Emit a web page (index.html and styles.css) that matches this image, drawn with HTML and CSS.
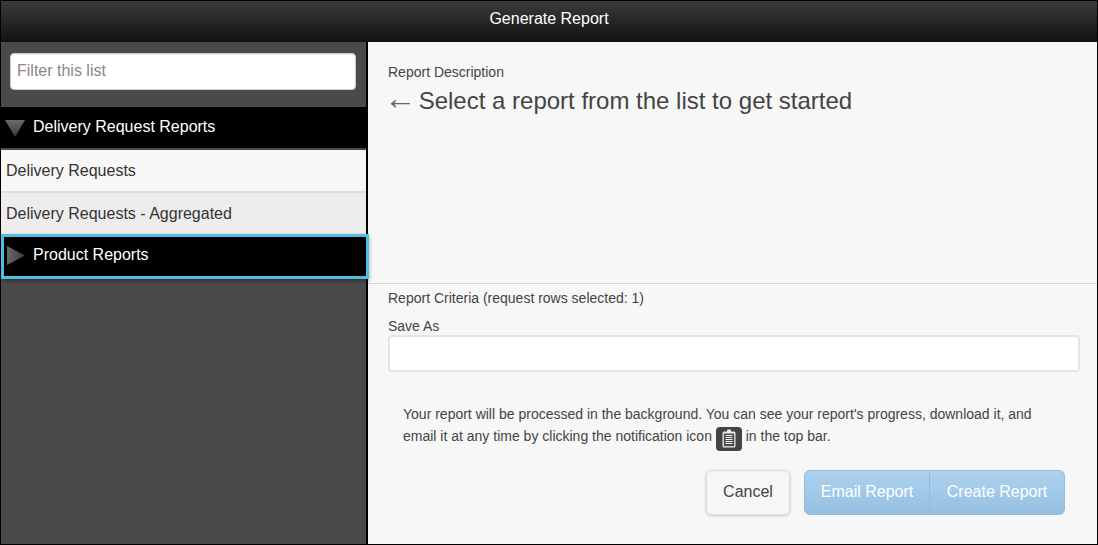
FILE: index.html
```html
<!DOCTYPE html>
<html lang="en">
<head>
<meta charset="utf-8">
<title>Generate Report</title>
<link rel="stylesheet" href="styles.css">
</head>
<body>
<div class="window">
  <header class="titlebar">Generate Report</header>
  <div class="main">
    <aside class="sidebar">
      <div class="filter-wrap">
        <input class="filter" type="text" placeholder="Filter this list">
      </div>
      <div class="group group-open">
        <svg class="tri" width="20" height="18" viewBox="0 0 20 18"><defs><linearGradient id="g1" x1="0" y1="0" x2="0" y2="1"><stop offset="0" stop-color="#6a6a6a"/><stop offset="1" stop-color="#3a3a3a"/></linearGradient></defs><path d="M0 1H20L10 18Z" fill="url(#g1)"/></svg>
        <span>Delivery Request Reports</span>
      </div>
      <div class="item">Delivery Requests</div>
      <div class="item item-alt">Delivery Requests - Aggregated</div>
      <div class="group group-focus">
        <svg class="tri tri-right" width="18" height="19" viewBox="0 0 18 19"><defs><linearGradient id="g2" x1="0" y1="0" x2="1" y2="0"><stop offset="0" stop-color="#6a6a6a"/><stop offset="1" stop-color="#3a3a3a"/></linearGradient></defs><path d="M0 0V19L18 9.500Z" fill="url(#g2)"/></svg>
        <span>Product Reports</span>
      </div>
    </aside>
    <section class="content">
      <div class="description">
        <div class="label">Report Description</div>
        <div class="prompt"><span class="arrow">←</span> Select a report from the list to get started</div>
      </div>
      <div class="criteria">
        <div class="label">Report Criteria (request rows selected: 1)</div>
        <label class="label save-label" for="save">Save As</label>
        <input class="save" id="save" type="text">
        <p class="note">Your report will be processed in the background. You can see your report's progress, download it, and<br>email it at any time by clicking the notification icon <span class="notif"><svg width="14" height="19" viewBox="0 0 14 19"><path d="M5 2.500V1.500A1 1 0 0 1 6 .5H8A1 1 0 0 1 9 1.500V2.500H12A1.500 1.500 0 0 1 13.500 4V17A1.500 1.500 0 0 1 12 18.500H2A1.500 1.500 0 0 1 .5 17V4A1.500 1.500 0 0 1 2 2.500Z" fill="#ececec"/><path d="M1.800 4.500H12.200V17.200H1.800Z" fill="#4a4a4a"/><path d="M3.500 6.500H10.500M3.500 8.500H10.500M3.500 10.500H10.500M3.500 12.500H10.500M3.500 14.500H10.500" stroke="#f2f2f2" stroke-width="1"/></svg></span> in the top bar.</p>
        <div class="actions">
          <button class="btn btn-cancel" type="button">Cancel</button>
          <div class="btn-group">
            <button class="btn btn-primary btn-left" type="button">Email Report</button>
            <button class="btn btn-primary btn-right" type="button">Create Report</button>
          </div>
        </div>
      </div>
    </section>
  </div>
</div>
</body>
</html>
```

FILE: styles.css
```css
* { box-sizing: border-box; }
html, body { margin: 0; padding: 0; }
body { font-family: "Liberation Sans", Arial, sans-serif; color: #333; overflow: hidden; }
.window { width: 1098px; height: 545px; border: 1px solid #000; display: flex; flex-direction: column; background: #f7f7f7; }
.titlebar { height: 41px; flex: none; display: flex; align-items: center; justify-content: center; padding-bottom: 5px; color: #fff; font-size: 16px; background: linear-gradient(#3b3b3b, #111); }
.main { flex: 1; display: flex; min-height: 0; }
.sidebar { width: 367px; flex: none; background: #4a4a4a; border-right: 2px solid #000; display: flex; flex-direction: column; }
.filter-wrap { height: 65px; flex: none; padding: 11px 10px 0 9px; }
.filter { display: block; width: 346px; height: 37px; border: 1px solid #ccc; border-radius: 4px; padding: 0 6px 2px; font: 16px "Liberation Sans", Arial, sans-serif; color: #333; background: #fff; outline: none; box-shadow: inset 0 1px 1px rgba(0,0,0,.075); }
.filter::placeholder { color: #888; opacity: 1; }
.group { display: flex; align-items: center; background: #000; color: #fff; font-size: 16px; }
.group-open { height: 41px; margin-bottom: 2px; padding-left: 4px; gap: 8px; }
.group-open span { margin-bottom: 2px; }
.group-focus { height: 45px; width: 368px; position: relative; z-index: 1; border: 3px solid #4fbde6; padding-left: 3px; gap: 8px; box-shadow: 0 2px 4px rgba(0,0,0,.35); }
.group-focus span { margin-bottom: 4px; }
.tri-right { margin-bottom: 2px; }
.item { height: 43px; padding: 0 5px; display: flex; align-items: center; font-size: 16px; color: #333; background: #f7f7f7; border-bottom: 2px solid #ddd; }
.item-alt { height: 41px; background: #ededed; border-bottom: 0; }
.content { flex: 1; min-width: 0; display: flex; flex-direction: column; }
.description { height: 242px; flex: none; padding: 22px 18px 0 20px; border-bottom: 1px solid #d8d8d8; }
.label { font-size: 14px; line-height: 17px; color: #444; display: block; }
.prompt { font-size: 24px; line-height: 28px; margin-top: 6px; color: #444; }
.arrow { display: inline-block; font-size: 32px; line-height: 0; width: 24px; margin-left: -4px; margin-right: 4px; color: #666; }
.criteria { padding: 6px 18px 0 20px; flex: 1; }
.save-label { margin-top: 11px; }
.save { display: block; width: 692px; height: 37px; border: 2px solid #e4e4e4; border-radius: 4px; background: #fff; outline: none; }
.note { margin: 31px 0 0 15px; font-size: 14px; line-height: 22px; color: #444; }
.notif { display: inline-flex; width: 26px; height: 24px; align-items: center; justify-content: center; background: #444; border-radius: 4px; vertical-align: -7px; }
.actions { display: flex; justify-content: flex-end; gap: 14px; margin-top: 19px; padding-right: 14px; }
.btn { height: 45px; font: 16px "Liberation Sans", Arial, sans-serif; padding: 0; }
.btn-cancel { width: 84px; background: #f6f6f6; color: #444; border: 1px solid #ddd; border-radius: 5px; box-shadow: 0 1px 3px rgba(0,0,0,.2); }
.btn-group { display: flex; }
.btn-primary { color: #fff; background: linear-gradient(#aed2ee, #95bfe2); border: 1px solid #94bbdc; }
.btn-left { width: 126px; border-radius: 6px 0 0 6px; }
.btn-right { width: 135px; border-left: 0; border-radius: 0 6px 6px 0; }
```
